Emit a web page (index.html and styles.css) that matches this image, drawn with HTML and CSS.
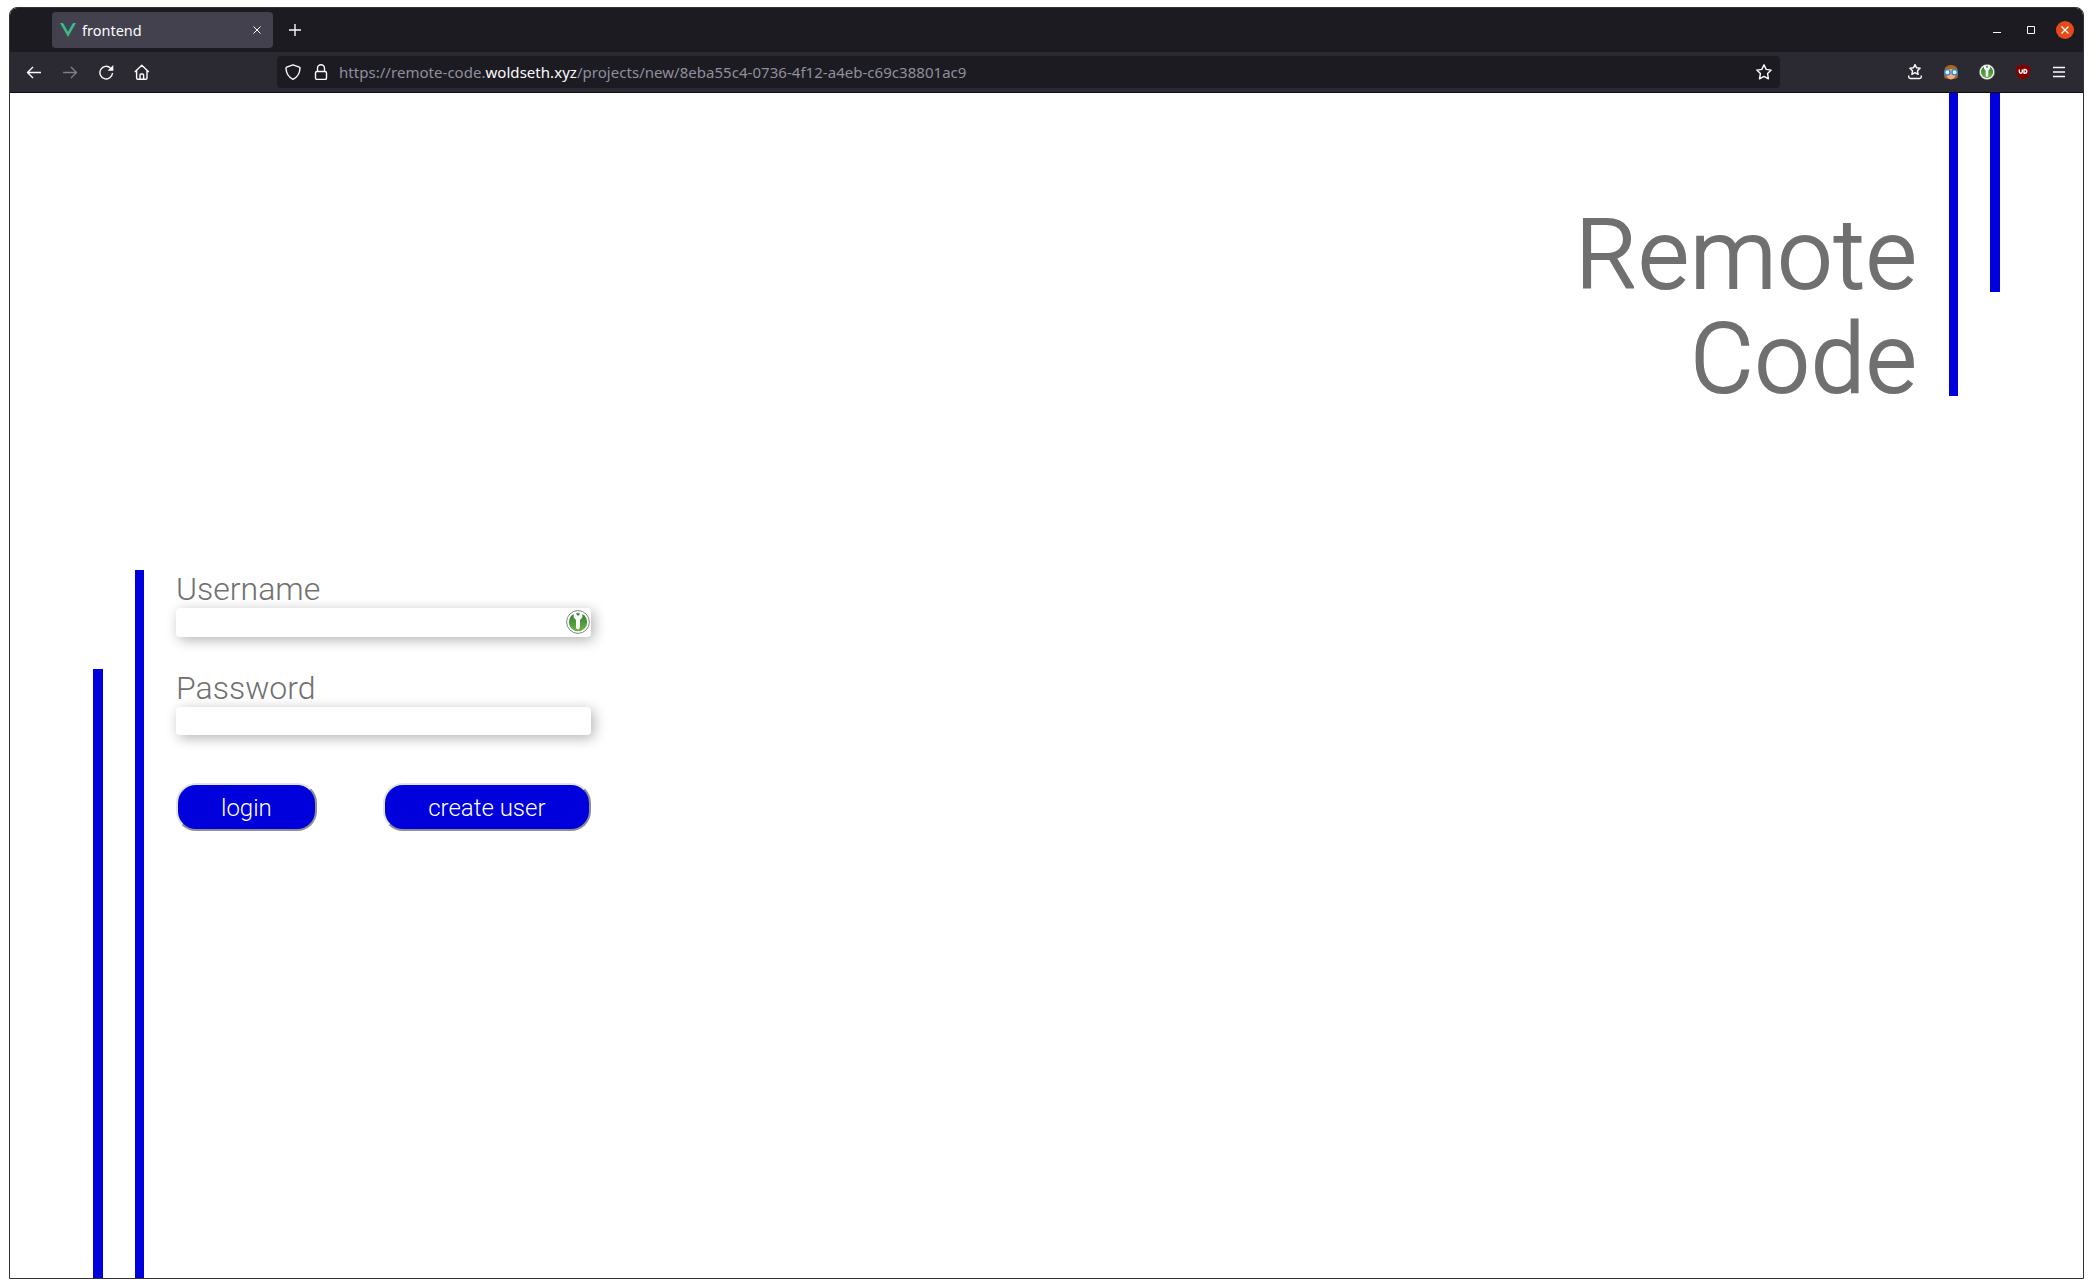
FILE: index.html
```html
<!DOCTYPE html>
<html lang="en">
<head>
<meta charset="utf-8">
<title>frontend</title>
<link rel="stylesheet" href="styles.css">
</head>
<body>
<svg class="defs" width="0" height="0">
  <linearGradient id="green" x1="0" y1="0" x2="0" y2="1"><stop offset="0" stop-color="#2f7d2f"/><stop offset="1" stop-color="#6ab446"/></linearGradient>
  <symbol id="key" viewBox="0 0 24 24">
    <circle cx="12" cy="12" r="11.4" fill="#fff" stroke="#777" stroke-width=".9"/>
    <circle cx="12" cy="12" r="9.2" fill="url(#green)"/>
    <path d="M7.600 3h8.800v4.200L14 10v7l-1 2.300h-2l-1-1.300v-8L7.600 7.200z" fill="#fff"/>
    <path d="M10 3.300h4l-1.200 2.200h-1.600z" fill="#2f7d2f"/>
  </symbol>
</svg>
<div class="window">
  <header class="tabs">
    <div class="tab">
      <svg class="vue" width="16" height="14" viewBox="0 0 16 14"><path d="M0 0h3.200L8 8.500 12.800 0H16L8 14z" fill="#41b883"/><path d="M3.200 0H6l2 3.500L10 0h2.800L8 8.500z" fill="#35495e"/></svg>
      <span class="tab-name">frontend</span>
      <svg class="tab-close" width="8" height="8" viewBox="0 0 8 8"><path d="M.5.5l7 7M7.500.5l-7 7"/></svg>
    </div>
    <svg class="plus" width="12" height="12" viewBox="0 0 12 12"><path d="M6 0v12M0 6h12"/></svg>
    <div class="controls">
      <svg width="8" height="12" viewBox="0 0 8 12"><path d="M0 8.500h8" stroke-width="1"/></svg>
      <svg width="8" height="8" viewBox="0 0 8 8"><path d="M.5.5h7v7h-7z" stroke-width="1"/></svg>
      <svg width="18" height="18" viewBox="0 0 18 18"><circle cx="9" cy="9" r="9" fill="#e64b17" stroke="none"/><path d="M5.500 5.500l7 7M12.500 5.500l-7 7"/></svg>
    </div>
  </header>
  <nav class="toolbar">
    <div class="nav-icons">
      <svg width="16" height="16" viewBox="0 0 16 16"><path d="M15 8.500H1.500M7 3L1.500 8.500 7 14"/></svg>
      <svg class="dim" width="16" height="16" viewBox="0 0 16 16"><path d="M1 8.500h13.500M9 3l5.500 5.500L9 14"/></svg>
      <svg width="16" height="16" viewBox="0 0 16 16"><path d="M14.500 9a6.300 6.300 0 1 1-2-5"/><path d="M15.300 1v5.700H9.600z" fill="#fbfbfe" stroke="none"/></svg>
      <svg width="16" height="16" viewBox="0 0 16 16"><path d="M.8 8L7.800 1.300 14.800 8M2.600 6.800V14q0 1.200 1.200 1.200h8q1.200 0 1.200-1.200V6.800M6 15v-4q0-1 1-1h1.600q1 0 1 1v4"/></svg>
    </div>
    <div class="urlbar">
      <svg width="16" height="16" viewBox="0 0 16 16"><path d="M8 .8l6.300 2.400q.8.300.7 1.100-.4 8-7 11-6.600-3-7-11-.1-.8.700-1.100z"/></svg>
      <svg width="14" height="16" viewBox="0 0 14 16"><rect x="1.500" y="7.500" width="11" height="8" rx="1.500"/><path d="M3.500 7.500V4.200a3.500 3.500 0 0 1 7 0v3.300"/></svg>
      <div class="url">https://remote-code.<span class="host">woldseth.xyz</span>/projects/new/8eba55c4-0736-4f12-a4eb-c69c38801ac9</div>
      <svg class="star" width="16" height="16" viewBox="0 0 16 16"><path d="M8 .8l2.200 4.600 5 .7-3.600 3.500.8 5.200L8 12.400l-4.500 2.400.9-5.200L.8 6.100l5-.7z"/></svg>
    </div>
    <div class="addons">
      <svg width="16" height="16" viewBox="0 0 16 16"><path d="M8 .6l1.500 3.200 3.600.500-2.600 2.500.6 3.600L8 8.700l-3.100 1.700.6-3.600-2.600-2.500 3.600-.5z"/><path d="M1.700 11.500v1.300q0 1.700 1.700 1.700h9.200q1.700 0 1.700-1.700v-1.300"/></svg>
      <svg class="face" width="16" height="16" viewBox="0 0 16 16"><path d="M1.500 14Q-1 1 8 1t6.500 13l-3.500 1H5z" fill="#a8691c"/><path d="M3.500 6q4.500-2 9 0v6q-2 3.500-4.500 3.500T3.500 12z" fill="#f0a87c"/><circle cx="4.400" cy="8.300" r="2.600" fill="#e8f6fe" stroke="#1c8ae6" stroke-width="1.300"/><circle cx="11.600" cy="8.300" r="2.600" fill="#e8f6fe" stroke="#1c8ae6" stroke-width="1.300"/></svg>
      <svg class="key-addon" width="16" height="16"><use href="#key"/></svg>
      <svg width="16" height="16" viewBox="0 0 16 16"><path d="M8 .3q3 1.700 7 1.700v6q0 5-7 7.700Q1 13 1 8V2Q5 2 8 .3z" fill="#800000" stroke="#5c1d24" stroke-width=".6"/><path d="M4.300 5.500v2q0 1.700 1.500 1.700t1.500-1.700v-2M9 5.500v3.700h.9q1.900 0 1.900-1.900T9.900 5.500z"/></svg>
      <svg class="menu" width="12" height="12" viewBox="0 0 12 12"><path d="M0 1.500h12M0 6h12M0 10.500h12"/></svg>
    </div>
  </nav>
  <main class="page">
    <section class="hero">
      <h1>Remote<br>Code</h1>
      <i class="bar hero-long"></i>
      <i class="bar hero-short"></i>
    </section>
    <section class="login">
      <i class="bar login-short"></i>
      <i class="bar login-long"></i>
      <form>
        <label for="user">Username</label>
        <div class="field"><input id="user" type="text"><svg width="24" height="24"><use href="#key"/></svg></div>
        <label for="pass">Password</label>
        <div class="field"><input id="pass" type="password"></div>
        <div class="buttons"><button type="button">login</button><button type="button">create user</button></div>
      </form>
    </section>
  </main>
</div>
</body>
</html>
```
FILE: styles.css
```css
* { box-sizing: border-box; }
body { margin: 0; height: 1288px; padding: 7px 9px 9px; background: #fff; overflow: hidden; font-family: Roboto, sans-serif; }
.defs { position: absolute; }
svg { flex: none; display: block; }
.window { width: 2075px; height: 1272px; border: 1px solid #333; border-radius: 8px 8px 0 0; overflow: hidden; }
.tabs, .toolbar { display: flex; align-items: center; font-family: "Noto Sans", "Open Sans", sans-serif; color: #fbfbfe; }
.tabs svg, .toolbar svg { fill: none; stroke: #fbfbfe; stroke-width: 1.4; stroke-linecap: butt; stroke-linejoin: round; }
.tabs { height: 44px; background: #1c1b22; padding-left: 42px; }
.tab { width: 221px; height: 36px; border-radius: 4px; background: #42414d; display: flex; align-items: center; padding: 0 12px 0 8px; }
.tabs .vue, .toolbar .face, .toolbar .key-addon { stroke: none; }
.tab-name { margin-left: 6px; font-size: 14.500px; flex: 1; }
.tabs .tab-close { stroke-width: 1; }
.plus { margin-left: 16px; }
.controls { margin-left: auto; display: flex; align-items: center; gap: 26px; padding-right: 9px; }
.controls svg:last-child { margin-left: -5px; }
.toolbar { height: 41px; background: #2b2a33; border-bottom: 1px solid #0c0c0d; }
.nav-icons { display: flex; gap: 20px; padding-left: 16px; width: 267px; }
.dim { opacity: .4; }
.urlbar { width: 1503px; height: 32px; border-radius: 4px; background: #1c1b22; display: flex; align-items: center; padding: 0 8px; }
.urlbar svg + svg { margin-left: 13px; }
.url { margin-left: 11px; flex: 1; font-size: 15px; letter-spacing: .035px; white-space: nowrap; color: #8f8f9d; }
.host { color: #fbfbfe; }
.addons { display: flex; align-items: center; gap: 20px; margin-left: auto; padding-right: 18px; }
.addons .menu { margin-left: 2px; }
.page { height: 1185px; display: flex; flex-direction: column; justify-content: space-between; background: #fff; }
.bar { display: block; flex: none; background: #0000dc; }
.hero { display: flex; justify-content: flex-end; padding-right: 83px; }
h1 { margin: 110px 31px 0 0; font-size: 97px; line-height: 104px; font-weight: 300; letter-spacing: 1.500px; -webkit-text-stroke: 2.200px #707070; color: #707070; text-align: right; }
.hero-long { width: 9px; height: 303px; }
.hero-short { width: 10px; height: 199px; margin-left: 32px; }
.login { display: flex; align-items: flex-end; height: 708px; padding-left: 83px; }
.login-short { width: 10px; height: 609px; }
.login-long { width: 9px; height: 708px; margin-left: 32px; }
form { width: 415px; height: 708px; margin-left: 32px; }
label { display: block; height: 38px; font-size: 32px; line-height: 39px; font-weight: 300; color: #707070; }
.field { position: relative; height: 29px; margin-bottom: 32px; }
.field input { display: block; width: 415px; height: 100%; border: 0; border-radius: 4px; background: #fff; box-shadow: 3px 3px 13px rgba(0,0,0,.3); }
.field svg { position: absolute; right: 1px; top: 2px; }
.field:nth-of-type(2) { height: 28px; margin-bottom: 48px; }
.buttons { display: flex; justify-content: space-between; }
button { height: 48px; padding: 1px 43px 0; border: 2px outset #e3e3e3; border-radius: 20px; background: #0000dc; color: #fff; font: 300 24px Roboto, sans-serif; }
button + button { padding: 1px 43.500px 0; }
```
